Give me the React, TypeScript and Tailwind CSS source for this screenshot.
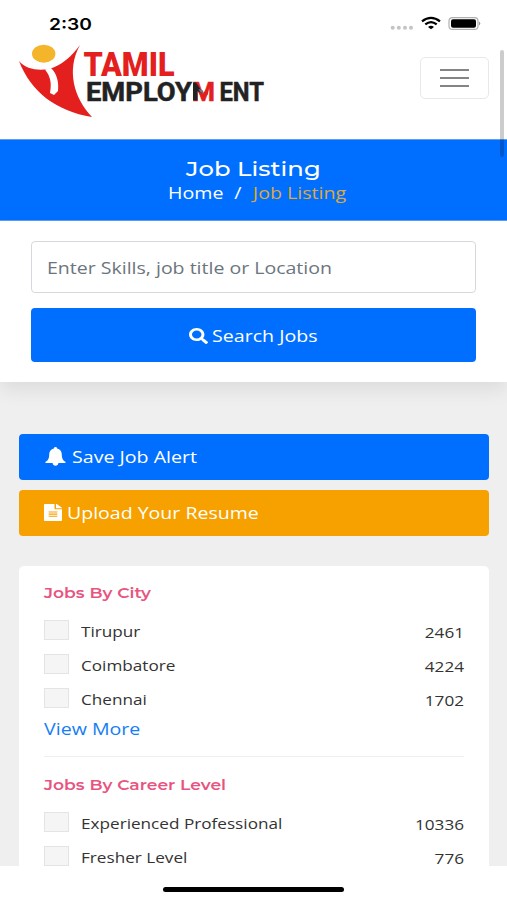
import React from "react";
import { FaFileAlt, FaSearch } from "react-icons/fa";

const body = "font-['Open_Sans','Noto_Sans',sans-serif]";
const heading = "font-['Montserrat','Inter',sans-serif]";

function Wide({ className = "", children }: { className?: string; children: React.ReactNode }) {
  return <span className={`inline-block whitespace-nowrap ${className}`}>{children}</span>;
}

function StatusBar() {
  return (
    <div className="flex h-[43px] items-start justify-between pl-[49px] pr-[26px]">
      <Wide className="mt-[12px] origin-left scale-x-[1.2] font-['Inter',sans-serif] text-[16px] leading-6 font-semibold text-black">2:30</Wide>
      <svg className="mt-[14px]" width="92" height="20" viewBox="0 0 92 20">
        <g fill="#c4c4c4">
          <circle cx="3.7" cy="13.7" r="2" />
          <circle cx="9.8" cy="13.7" r="2" />
          <circle cx="16" cy="13.7" r="2" />
          <circle cx="22" cy="13.7" r="2" />
        </g>
        <g fill="none" stroke="#000" strokeWidth="2.3">
          <path d="M33 7.4Q42 .4 51 7.4" />
          <path d="M36.3 10.4Q42 5.8 47.7 10.4" />
        </g>
        <path d="M39 12.9Q42 10.6 45 12.9L42 15.2Z" />
        <rect x="60" y="3.6" width="29" height="11.8" rx="3.5" fill="#fff" stroke="#b0b0b0" strokeWidth="1.2" />
        <rect x="62" y="5.2" width="25" height="8.6" rx="2" />
        <path d="M90 7.5Q92.5 9.5 90 11.5Z" fill="#999" />
      </svg>
    </div>
  );
}

function Logo() {
  return (
    <svg className="ml-[17px]" width="250" height="78" viewBox="17 42 250 78">
      <path d="M19 61C26 69 37 71 49 69C61 66 72 56 80 45C66 70 74 98 92 117C56 111 31 92 19 61Z" fill="#e4201f" />
      <path d="M45 69.5C50 76 52 82 50 93L54 95L58 91C59 82 57 74 51 68Z" fill="#fff" />
      <ellipse cx="43.7" cy="53.7" rx="11.7" ry="9" fill="#f5b52b" />
      <g className="font-['Roboto',sans-serif]">
        <text x="83.5" y="75.5" fontSize="33.5" fontWeight="900" fill="#e4201f" textLength="91" lengthAdjust="spacingAndGlyphs">TAMIL</text>
        <g fontSize="25" fontWeight="700" fill="#222" stroke="#222" strokeWidth=".5">
          <text x="86" y="100.5" textLength="106" lengthAdjust="spacingAndGlyphs">EMPLOY</text>
          <text x="192" y="100.5" textLength="23" lengthAdjust="spacingAndGlyphs" fill="#e4201f" stroke="#e4201f">M</text>
          <text x="219.5" y="100.5" textLength="44.5" lengthAdjust="spacingAndGlyphs">ENT</text>
        </g>
      </g>
      <path d="M193 82.5H196L203 93L200 94L197.5 91V100.5H193Z" fill="#222" />
      <path d="M198 91L202.5 94L208 87V94L202.5 100.5Z" fill="#e4201f" />
      <path d="M198.5 89L202.5 90L204 93L200.5 92.5Z" fill="#777" />
    </svg>
  );
}

function BellIcon() {
  return (
    <svg className="h-[19px] w-[21px]" viewBox="0 0 21 19" fill="currentColor">
      <path d="M10.5 0C11.5 0 12.1.6 12.1 1.5C15 2.1 16.8 4.3 16.8 7.2C16.8 11.5 18 13.3 20.4 14.8C21 15.3 20.7 16 20 16H13.4C13.2 17.7 12.1 18.7 10.5 18.7S7.8 17.7 7.6 16H1C.3 16 0 15.3.6 14.8C3 13.3 4.2 11.5 4.2 7.2C4.2 4.3 6 2.1 8.9 1.5C8.9.6 9.5 0 10.5 0Z" />
    </svg>
  );
}

function FilterRow({ label, count }: { label: string; count: string }) {
  return (
    <div className="flex h-[34px] items-start">
      <span className="mt-px h-[20px] w-[25px] shrink-0 border border-[#e4e4e4] bg-[#f5f5f5]" />
      <Wide className="ml-[12px] origin-left scale-x-[1.225] text-[14px] leading-[26px]">{label}</Wide>
      <Wide className="mt-px ml-auto origin-right scale-x-[1.225] text-[14px] leading-[25px]">{count}</Wide>
    </div>
  );
}

function FilterTitle({ children }: { children: React.ReactNode }) {
  return (
    <h4 className={`flex h-[24px] text-[14px] leading-6 font-semibold text-[#e75480] ${heading}`}>
      <Wide className="origin-left scale-x-[1.225]">{children}</Wide>
    </h4>
  );
}

export default function App() {
  return (
    <div className={`relative flex h-[900px] w-full flex-col overflow-hidden bg-white text-[#333] ${body}`}>
      <header className="h-[139px] shrink-0">
        <StatusBar />
        <div className="-mt-px flex items-start justify-between pr-[18px]">
          <Logo />
          <button className="mt-[15px] flex h-[42px] w-[69px] flex-col items-center justify-center gap-[6px] rounded-[5px] border border-[#e8e8e8]">
            <span className="h-[2px] w-[29px] bg-[#858585]" />
            <span className="h-[2px] w-[29px] bg-[#858585]" />
            <span className="h-[2px] w-[29px] bg-[#858585]" />
          </button>
        </div>
      </header>

      <section className="flex h-[82px] shrink-0 flex-col items-center border-y border-[#5b9cf7] bg-[#006fff] pt-[18px] text-white">
        <h1 className={`text-[20px] leading-[23px] font-medium ${heading}`}>
          <Wide className="scale-x-[1.215]">Job Listing</Wide>
        </h1>
        <nav className="ml-[7px] flex w-[178px] text-[16px] leading-6">
          <Wide className="origin-left scale-x-[1.225]">Home</Wide>
          <Wide className="ml-[22px] scale-x-[1.225]">/</Wide>
          <Wide className="ml-auto origin-right scale-x-[1.225] text-[#dfa83a]">Job Listing</Wide>
        </nav>
      </section>

      <section className="relative z-10 flex h-[161px] shrink-0 flex-col gap-[15px] bg-white px-[31px] pt-[20px] shadow-[0_8px_18px_rgba(0,0,0,0.08)]">
        <div className="flex h-[52px] items-center rounded-[4px] border border-[#d5d9dd] px-[15px] pt-px text-[16px] text-[#6c757d]">
          <Wide className="origin-left scale-x-[1.22]">Enter Skills, job title or Location</Wide>
        </div>
        <button className="flex h-[54px] items-center rounded-[4px] bg-[#006fff] pl-[158px] text-[16px] text-white">
          <FaSearch className="mt-px h-[16px] w-[19px]" preserveAspectRatio="none" />
          <Wide className="mt-px ml-[4px] origin-left scale-x-[1.225]">Search Jobs</Wide>
        </button>
      </section>

      <main className="flex h-[484px] shrink-0 flex-col overflow-hidden bg-[#efefef] pr-[18px] pl-[19px] pt-[51.5px]">
        <button className="flex h-[46px] shrink-0 items-center rounded-[4px] bg-[#006fff] pl-[26px] text-[16px] text-white">
          <BellIcon />
          <Wide className="mt-px ml-[5.5px] origin-left scale-x-[1.225]">Save Job Alert</Wide>
        </button>
        <button className="mt-[10px] flex h-[46px] shrink-0 items-center rounded-[4px] bg-[#f7a100] pl-[25px] text-[16px] text-white">
          <FaFileAlt className="h-[17px] w-[18px]" preserveAspectRatio="none" />
          <Wide className="mt-px ml-[4.5px] origin-left scale-x-[1.22]">Upload Your Resume</Wide>
        </button>
        <section className="mt-[30.5px] h-[340px] shrink-0 rounded-t-[5px] bg-white pr-[25px] pl-[24.5px] pt-[15px]">
          <FilterTitle>Jobs By City</FilterTitle>
          <div className="mt-[14px]">
            <FilterRow label="Tirupur" count="2461" />
            <FilterRow label="Coimbatore" count="4224" />
            <FilterRow label="Chennai" count="1702" />
          </div>
          <a className="-mt-[4px] flex h-[24px] text-[16px] leading-6 text-[#157df5]">
            <Wide className="origin-left scale-x-[1.225]">View More</Wide>
          </a>
          <hr className="mt-[15px] mb-[16px] border-[#eeeeee]" />
          <FilterTitle>Jobs By Career Level</FilterTitle>
          <div className="mt-[13.5px]">
            <FilterRow label="Experienced Professional" count="10336" />
            <FilterRow label="Fresher Level" count="776" />
          </div>
        </section>
      </main>

      <footer className="flex h-[34px] shrink-0 justify-center bg-white pt-[21px]">
        <span className="h-[5px] w-[181px] rounded-full bg-black" />
      </footer>

      <span className="absolute top-[50px] right-[3px] z-20 h-[107px] w-[4px] rounded-full bg-black/20" />
    </div>
  );
}
